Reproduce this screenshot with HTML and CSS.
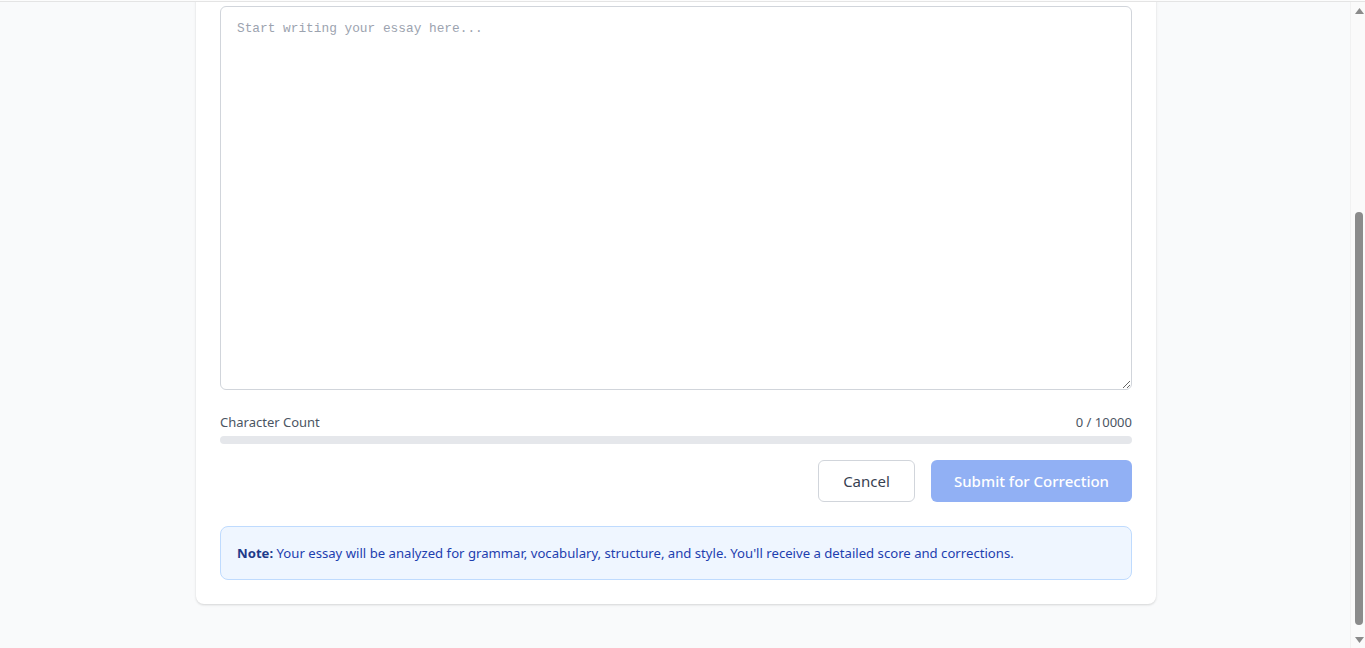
FILE: index.html
```html
<!DOCTYPE html>
<html lang="en">
<head>
  <meta charset="UTF-8">
  <meta name="viewport" content="width=device-width, initial-scale=1.0">
  <title>Essay Correction</title>
  <link rel="stylesheet" href="styles.css">
</head>
<body>
  <div class="window">
    <div class="page">
      <main class="container">
        <form class="card" onsubmit="return false">
          <textarea class="essay-input" id="essay" maxlength="10000" placeholder="Start writing your essay here..."></textarea>

          <div class="count-row">
            <span>Character Count</span>
            <span><span id="count">0</span> / 10000</span>
          </div>
          <div class="count-bar"><div class="count-fill" id="fill" style="width: 0%"></div></div>

          <div class="actions">
            <button type="button" class="btn btn-cancel">Cancel</button>
            <button type="submit" class="btn btn-submit" id="submit" disabled>Submit for Correction</button>
          </div>

          <div class="note">
            <strong>Note:</strong> Your essay will be analyzed for grammar, vocabulary, structure, and style. You'll receive a detailed score and corrections.
          </div>
        </form>
      </main>
    </div>

    <!-- vertical scrollbar -->
    <div class="scrollbar">
      <div class="scroll-btn">
        <svg width="9" height="6" viewBox="0 0 9 6"><polygon points="4.5,0 9,6 0,6" fill="#8b8b8b"/></svg>
      </div>
      <div class="scroll-track"><div class="scroll-thumb"></div></div>
      <div class="scroll-btn">
        <svg width="9" height="6" viewBox="0 0 9 6"><polygon points="0,0 9,0 4.5,6" fill="#8b8b8b"/></svg>
      </div>
    </div>
  </div>

  <script>
    const essay = document.getElementById('essay');

    essay.addEventListener('input', function() {
      const len = essay.value.length;
      document.getElementById('count').textContent = len;
      document.getElementById('fill').style.width = (len / 10000 * 100) + '%';
      document.getElementById('submit').disabled = len === 0;
    });
  </script>
</body>
</html>
```

FILE: styles.css
```css
html, body {
  margin: 0;
  height: 100%;
  overflow: hidden;
}
body {
  font-family: "Noto Sans", "Open Sans", Arial, sans-serif;
  color: #1f2937;
  background: #fcfcfc;
  display: flex;
  flex-direction: column;
}
.window {
  flex: 1;
  min-height: 0;
  display: flex;
  margin-top: 1px;
  border-top: 1px solid #e4e4e4;
}

/* the form sits at the bottom of the page, the top runs out of view */
.page {
  flex: 1;
  min-width: 0;
  overflow: hidden;
  display: flex;
  flex-direction: column;
  justify-content: flex-end;
  padding-left: 2px;
  background: #f9fafb;
}
.container {
  width: 960px;
  margin: 0 auto;
  padding-bottom: 44px;
}

.scrollbar {
  width: 15px;
  display: flex;
  flex-direction: column;
  background: #fafafa;
  border-left: 1px solid #f1f1f1;
  box-sizing: border-box;
}
.scroll-btn {
  height: 17px;
  display: flex;
  align-items: center;
  justify-content: center;
  padding-left: 2px;
}
.scroll-track {
  flex: 1;
  display: flex;
  flex-direction: column;
  justify-content: flex-end;
  align-items: flex-end;
  padding: 0 2px 6px 0;
}
.scroll-thumb {
  width: 8px;
  height: 413px;
  border-radius: 4px;
  background: #8b8b8b;
}

.card {
  display: flex;
  flex-direction: column;
  background: #fff;
  border-radius: 8px;
  box-shadow: 0 1px 3px rgba(0,0,0,0.1), 0 1px 2px rgba(0,0,0,0.06);
  padding: 24px;
}
.essay-input {
  height: 384px;
  box-sizing: border-box;
  border: 1px solid #d1d5db;
  border-radius: 6px;
  padding: 11px 16px;
  font-family: "Liberation Mono", "DejaVu Sans Mono", monospace;
  font-size: 12.8px;
  line-height: 21px;
  color: #1f2937;
  resize: vertical;
  outline: none;
}
.essay-input::placeholder {
  color: #9ca3af;
}

.count-row {
  display: flex;
  justify-content: space-between;
  margin-top: 22px;
  font-size: 13px;
  line-height: 20px;
  color: #4b5563;
}
.count-bar {
  height: 8px;
  margin-top: 4px;
  border-radius: 999px;
  background: #e5e7eb;
  overflow: hidden;
}
.count-fill {
  height: 100%;
  background: #2563eb;
}

.actions {
  display: flex;
  justify-content: flex-end;
  gap: 16px;
  margin-top: 16px;
}
.btn {
  height: 42px;
  border-radius: 6px;
  font-family: inherit;
  font-size: 15px;
  cursor: pointer;
}
.btn-cancel {
  width: 97px;
  background: #fff;
  border: 1px solid #d1d5db;
  color: #374151;
}
.btn-submit {
  width: 201px;
  background: #2563eb;
  border: none;
  color: #fff;
  font-weight: 500;
}
.btn-submit:disabled {
  opacity: 0.5;
  cursor: not-allowed;
}

.note {
  margin-top: 24px;
  padding: 16px;
  background: #eff6ff;
  border: 1px solid #bfdbfe;
  border-radius: 8px;
  font-size: 13.15px;
  line-height: 20px;
  color: #1e40af;
}
.note strong {
  color: #1e3a8a;
}
```
